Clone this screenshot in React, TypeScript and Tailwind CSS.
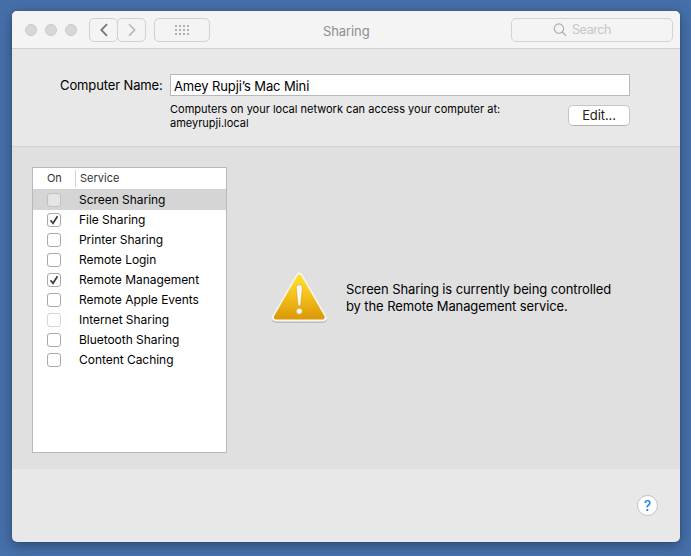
import React from 'react';

type Service = { name: string; on?: boolean; disabled?: boolean; selected?: boolean };

const services: Service[] = [
  { name: 'Screen Sharing', disabled: true, selected: true },
  { name: 'File Sharing', on: true },
  { name: 'Printer Sharing' },
  { name: 'Remote Login' },
  { name: 'Remote Management', on: true },
  { name: 'Remote Apple Events' },
  { name: 'Internet Sharing', disabled: true },
  { name: 'Bluetooth Sharing' },
  { name: 'Content Caching' },
];

function TitleBar() {
  return (
    <header className="flex h-[38px] shrink-0 items-start border-b border-[#cfd1cf] bg-[#f4f4f4] pl-[13px] pr-[7px] pt-[7px]">
      <div className="flex h-6 items-center gap-2">
        {[0, 1, 2].map((i) => (
          <span key={i} className="size-3 rounded-full border border-[#c9c9c9] bg-[#d7d7d7]" />
        ))}
      </div>
      <div className="ml-3 flex h-6 w-[57px] rounded-[5px]">
        <button className="flex w-[29px] items-center justify-center rounded-[5px] border border-[#d0d0d0]">
          <svg width="8" height="14" viewBox="0 0 8 14" fill="none" stroke="#777" strokeWidth="1.8">
            <path d="M7 1.2 1.3 7 7 12.8" />
          </svg>
        </button>
        <button className="-ml-px flex w-[29px] items-center justify-center rounded-[5px] border border-[#d0d0d0]">
          <svg width="8" height="14" viewBox="0 0 8 14" fill="none" stroke="#b5b5b5" strokeWidth="1.6">
            <path d="M1 1.2 6.7 7 1 12.8" />
          </svg>
        </button>
      </div>
      <button className="ml-2 flex h-6 w-14 items-center justify-center rounded-[5px] border border-[#d0d0d0]">
        <span className="grid grid-cols-4 gap-[2px]">
          {Array.from({ length: 12 }, (_, i) => (
            <span key={i} className="size-[2px] bg-[#b0b0b0]" />
          ))}
        </span>
      </button>
      <h1 className="ml-[113px] mt-[3px] w-[60px] text-[13px] leading-5 tracking-[-0.1px] text-[#8e8e8e]">Sharing</h1>
      <div className="ml-auto flex h-6 w-[162px] items-center rounded-[5px] border border-[#d3d3d3] pl-[41px]">
        <svg width="14" height="14" viewBox="0 0 14 14" fill="none" stroke="#aaa" strokeWidth="1.1">
          <circle cx="5.9" cy="5.6" r="4.7" />
          <path d="m9.3 9 3.8 3.8" />
        </svg>
        <span className="ml-[5px] text-[12.5px] leading-5 tracking-[-0.4px] text-[#c6c6c6]">Search</span>
      </div>
    </header>
  );
}

function Checkbox({ on, disabled, selected }: Service) {
  const tone = selected
    ? 'border-[#c1c1c1] bg-[#e5e5e5]'
    : disabled
      ? 'border-[#d6d6d6] bg-white'
      : 'border-[#a9a9a9] bg-white';
  return (
    <span className={`flex size-[14px] items-center justify-center rounded-[3px] border ${tone}`}>
      {on && (
        <svg width="10" height="10" viewBox="0 0 10 10" fill="none" stroke="#3b3b3b" strokeWidth="1.7">
          <path d="M1.5 5.2 4 8.2 8.5 1.2" />
        </svg>
      )}
    </span>
  );
}

function ServiceTable() {
  return (
    <div className="h-[286px] w-[195px] border border-[#b9b9b9] bg-white">
      <div className="flex h-[22px] items-center border-b border-[#d2d2d2] text-[11px] text-[#333]">
        <span className="w-[42px] pl-[14px] tracking-[-0.1px]">On</span>
        <span className="h-[17px] border-l border-[#d4d4d4] pl-1 leading-[17px]">Service</span>
      </div>
      {services.map((s) => (
        <div key={s.name} className={`flex h-5 items-center pl-[14px] ${s.selected ? 'bg-[#d5d5d5]' : ''}`}>
          <Checkbox {...s} />
          <span className="ml-[18px] text-[12px] leading-5 tracking-[-0.04px]">{s.name}</span>
        </div>
      ))}
    </div>
  );
}

function WarningIcon() {
  return (
    <svg className="shrink-0" width="60" height="54" viewBox="0 0 60 54">
      <defs>
        <linearGradient id="gold" x1="0" y1="0" x2="0" y2="1">
          <stop offset="0" stopColor="#ffdf2c" />
          <stop offset="0.5" stopColor="#f3be1b" />
          <stop offset="1" stopColor="#dc9c08" />
        </linearGradient>
        <filter id="drop" x="-20%" y="-20%" width="140%" height="140%">
          <feDropShadow dx="0" dy="0.7" stdDeviation="0.7" floodColor="#000" floodOpacity="0.45" />
        </filter>
      </defs>
      <path d="M30.3 5.6 54 46.6H6.6Z" fill="#f5f5f5" stroke="#f5f5f5" strokeWidth="7.6" strokeLinejoin="round" filter="url(#drop)" />
      <path d="M30.3 6 53.4 46.2H7.2Z" fill="url(#gold)" stroke="url(#gold)" strokeWidth="4.6" strokeLinejoin="round" />
      <path d="M27.2 17c0-4.2 6.2-4.2 6.2 0L31.7 33.2c-.2 2-2.6 2-2.8 0Z" fill="#f8f8ef" stroke="#b88718" strokeWidth="0.4" />
      <circle cx="30.3" cy="40.2" r="3" fill="#f8f8ef" stroke="#b88718" strokeWidth="0.4" />
    </svg>
  );
}

export default function App() {
  return (
    <div className="h-[556px] w-[691px] bg-[#456fa9] pl-3 pt-[11px] font-[Inter,'Liberation_Sans',sans-serif] text-black">
      <main className="flex h-[531px] w-[668px] flex-col overflow-hidden rounded-[5px] bg-[#e8e8e8] shadow-[0_3px_12px_rgba(0,0,0,0.35),0_0_1px_rgba(0,0,0,0.5)]">
        <TitleBar />
        <section className="flex h-[98px] shrink-0 border-b border-[#d1d1d1] pl-12 pt-[25px]">
          <label className="w-[110px] text-[13px] leading-[22px] tracking-[-0.12px]">
            <span className="whitespace-nowrap">Computer Name:</span>
          </label>
          <div className="w-[460px]">
            <div className="h-[22px] border border-[#b8b8b8] bg-white pl-[3px] text-[13px] leading-[22px] tracking-[-0.12px]">
              Amey Rupji’s Mac Mini
            </div>
            <div className="flex justify-between">
              <p className="mt-[6px] whitespace-nowrap text-[11px] leading-[14px]">
                Computers on your local network can access your computer at:
                <br />
                ameyrupji.local
              </p>
              <button className="mt-[9px] h-[21px] w-[62px] rounded-[5px] border border-[#c5c5c5] border-b-[#b2b2b2] bg-white text-[13px] leading-[19px] tracking-[-0.1px] text-[#222]">
                Edit...
              </button>
            </div>
          </div>
        </section>
        <section className="flex h-[322px] shrink-0 bg-[#e0e0e0] pl-5 pt-5">
          <ServiceTable />
          <div className="ml-[42px] mt-[104px] flex h-[54px]">
            <WarningIcon />
            <p className="ml-[17px] mt-[10px] whitespace-nowrap text-[13px] leading-[17px] tracking-[-0.1px]">
              Screen Sharing is currently being controlled
              <br />
              by the Remote Management service.
            </p>
          </div>
        </section>
        <footer className="flex justify-end pr-[22px] pt-[26px]">
          <button className="flex size-[21px] items-center justify-center rounded-full border border-[#c0c0c0] bg-white text-[14px] font-medium leading-none text-[#1680fb]">
            ?
          </button>
        </footer>
      </main>
    </div>
  );
}
